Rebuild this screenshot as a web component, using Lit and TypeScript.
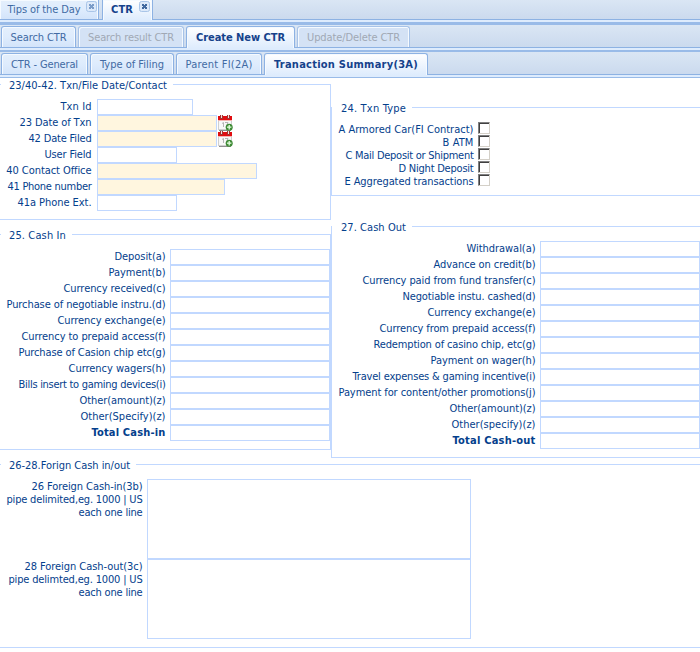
import { LitElement, html, css, svg } from "lit";
import { customElement, property } from "lit/decorators.js";

type Text = [string, number];

interface Field {
  label: Text[];
  width?: number;
  required?: boolean;
  date?: boolean;
  bold?: boolean;
}

const f = (text: string, w: number, extra: Partial<Field> = {}): Field => ({ label: [[text, w]], width: 160, ...extra });

const contact: Field[] = [
  f("Txn Id", 31, { width: 96 }),
  f("23 Date of Txn", 72, { width: 120, required: true, date: true }),
  f("42 Date Filed", 63, { width: 120, required: true, date: true }),
  f("User Field", 47, { width: 80 }),
  f("40 Contact Office", 85, { width: 160, required: true }),
  f("41 Phone number", 84, { width: 128, required: true }),
  f("41a Phone Ext.", 74, { width: 80 }),
];

const txnTypes: Text[] = [
  ["A Armored Car(FI Contract)", 135],
  ["B ATM", 31],
  ["C Mail Deposit or Shipment", 128],
  ["D Night Deposit", 75],
  ["E Aggregated transactions", 129],
];

const cashIn: Field[] = [
  f("Deposit(a)", 51),
  f("Payment(b)", 57),
  f("Currency received(c)", 102),
  f("Purchase of negotiable instru.(d)", 159),
  f("Currency exchange(e)", 108),
  f("Currency to prepaid access(f)", 144),
  f("Purchase of Casion chip etc(g)", 147),
  f("Currency wagers(h)", 97),
  f("Bills insert to gaming devices(i)", 147),
  f("Other(amount)(z)", 86),
  f("Other(Specify)(z)", 85),
  f("Total Cash-in", 74, { bold: true }),
];

const cashOut: Field[] = [
  f("Withdrawal(a)", 69),
  f("Advance on credit(b)", 102),
  f("Currency paid from fund transfer(c)", 173),
  f("Negotiable instu. cashed(d)", 133),
  f("Currency exchange(e)", 108),
  f("Currency from prepaid access(f)", 156),
  f("Redemption of casino chip, etc(g)", 162),
  f("Payment on wager(h)", 105),
  f("Travel expenses & gaming incentive(i)", 183),
  f("Payment for content/other promotions(j)", 197),
  f("Other(amount)(z)", 86),
  f("Other(specify)(z)", 84),
  f("Total Cash-out", 83, { bold: true }),
];

const foreign: Text[][] = [
  [["26 Foreign Cash-in(3b)", 111], ["pipe delimited,eg. 1000 | US", 136], ["each one line", 64]],
  [["28 Foreign Cash-out(3c)", 118], ["pipe delimted,eg. 1000 | US", 134], ["each one line", 64]],
];

/** A single line of text tracked so that it fills a given width. */
@customElement("fit-text")
export class FitText extends LitElement {
  @property() text = "";
  @property({ type: Number }) w = 0;

  static styles = css`
    :host { display: inline-block; white-space: pre; }
    .t { display: inline-block; }
  `;

  updated() {
    const el = this.renderRoot.querySelector(".t") as HTMLElement;
    el.style.letterSpacing = "0px";
    const natural = el.getBoundingClientRect().width;
    el.style.letterSpacing = `${(this.w - natural) / this.text.length}px`;
  }

  render() {
    return html`<span class="t">${this.text}</span>`;
  }
}

const fit = ([text, w]: Text) => html`<fit-text .text=${text} .w=${w}></fit-text>`;

const calendar = svg`
  <rect x="1.5" y="4.5" width="13" height="10" fill="#f8f8f8" stroke="#cfcfcf"/>
  <path d="M2 15.5h12" stroke="#8e8e8e"/>
  <rect x="1" y="1" width="14" height="4" fill="#e00d10"/>
  <path d="M1 5.5h14" stroke="#f5b5b2"/>
  <path d="M3 0h3v4H3zM10 0h3v4h-3z" fill="#a33331"/>
  <path d="M4 0h1v3H4zM11 0h1v3h-1z" fill="#f2dede"/>
  <path d="M5 8.5l1.5-1V12M8 7.5h3L9 12" fill="none" stroke="#b4b4b4"/>
  <circle cx="12.2" cy="12.2" r="3.5" fill="#3f8b36"/>
  <path d="M12.2 10v4.4M10 12.2h4.4" stroke="#e6ffe0" stroke-width="1.3"/>`;

@customElement("app-root")
export class AppRoot extends LitElement {
  static styles = css`
    :host {
      display: block; width: 700px; height: 652px; overflow: hidden; background: #fff;
      font: 11px/13px "DejaVu Sans Condensed", "DejaVu Sans", sans-serif;
      color: #04408c;
    }
    * { box-sizing: border-box; }
    .strip {
      display: flex; align-items: flex-end; gap: 2px; padding-left: 1px;
      background: linear-gradient(#dae6f4, #cbdaee); border-bottom: 1px solid #8db2e3;
    }
    .one { height: 20px; gap: 3px; padding-left: 0; }
    .two { height: 23px; }
    .three { height: 23px; }
    .under { height: 2px; background: #deecfd; }
    .rule { background: #99bbe8; }
    .r3 { height: 3px; }
    .r1 { height: 1px; }
    .tab {
      flex: none; height: 21px; padding: 4px 0 0; text-align: center; color: #416aa3;
      border: 1px solid #8db2e3; border-bottom: 0; border-radius: 3px 3px 0 0;
      background: linear-gradient(#e4effc, #deecfd 50%, #d3e4fa);
      box-shadow: inset 1px 1px 0 #f5faff, inset -1px 0 0 #f5faff;
    }
    .one .tab { height: 19px; padding-top: 3px; border-top: 0; border-radius: 0; display: flex; }
    .one .tab:first-child { border-left: 0; }
    .one .tab svg { margin-top: -2px; }
    .tab.on {
      margin-bottom: -1px; height: 22px; color: #15428b; font-weight: bold;
      background: linear-gradient(#fff, #deecfd);
    }
    .one .tab.on { height: 20px; }
    .tab.off { color: #a0a8b4; border-color: #a7c3e8; background: #d4e2f5; }
    .cols { display: grid; grid-template-columns: 331px 369px; }
    .group { border: 1px solid #c1d8ff; padding-bottom: 8px; }
    .left .group { border-left: 0; padding-left: 1px; }
    .wide { border-left: 0; border-right: 0; margin-top: 6px; padding-left: 1px; }
    .right .group { border-right: 0; }
    .left .group:first-child { margin-top: 6px; }
    .left .group:last-child { margin-top: 14px; }
    .right .group:first-child { margin-top: 29px; }
    .right .group:last-child { margin-top: 30px; }
    .legend { width: fit-content; height: 13px; margin: -6px 0 7px; padding: 0 6px 0 8px; background: #fff; }
    .right .legend { padding-left: 9px; }
    .row { display: flex; height: 16px; }
    .label { flex: none; text-align: right; padding: 1px 0.5px 0 0; white-space: nowrap; }
    .contact .label { width: 91px; margin-right: 5px; }
    .in .label { width: 165px; margin-right: 4px; }
    .out .label { width: 204px; margin-right: 4px; }
    .bold { font-weight: bold; }
    .box { flex: none; height: 16px; border: 1px solid #c1d8ff; background: #fff; }
    .required { background: #fff6df; }
    .check { display: flex; height: 13px; }
    .check .label { width: 142px; margin-right: 4px; }
    .tick {
      width: 12px; height: 12px; background: #fff; border: 1px solid; border-color: #808080 #d4d0c8 #d4d0c8 #808080;
      box-shadow: inset 1px 1px 0 #404040;
    }
    .area { display: flex; height: 80px; }
    .area .label { width: 142px; margin-right: 4px; }
    .line { height: 13px; }
    .text { width: 324px; height: 80px; border: 1px solid #c1d8ff; }
    svg { display: block; flex: none; }
    fit-text { vertical-align: top; }
  `;

  private tab(text: Text, width: number, state = "") {
    return html`<div class="tab ${state}" style="width:${width}px">${fit(text)}</div>`;
  }

  private closeTab(text: Text, width: number, lead: number, gap: number, state = "") {
    return html`<div class="tab ${state}" style="width:${width}px;padding-left:${lead}px;column-gap:${gap}px">
      ${fit(text)}
      <svg width="11" height="11" viewBox="0 0 11 11">
        <rect x=".5" y=".5" width="10" height="10" rx="2" fill="#dce9f9" stroke="#a9c5e8"/>
        <path d="M3 3h2v1h1V3h2v2H7v1h1v2H6V7H5v1H3V6h1V5H3z" fill=${state ? "#41699f" : "#7b9cc8"}/>
      </svg></div>`;
  }

  private rows(fields: Field[]) {
    return fields.map(
      (x) => html`<div class="row">
        <div class="label ${x.bold ? "bold" : ""}">${fit(x.label[0])}</div>
        <div class="box ${x.required ? "required" : ""}" style="width:${x.width}px"></div>
        ${x.date ? html`<svg width="16" height="16" viewBox="0 0 16 16">${calendar}</svg>` : ""}
      </div>`
    );
  }

  render() {
    return html`
      <div class="strip one">
        ${this.closeTab(["Tips of the Day", 73], 99, 7.5, 5.5)}
        ${this.closeTab(["CTR", 22], 51, 8, 6, "on")}
      </div>
      <div class="under"></div>
      <div class="rule r3"></div>
      <div class="strip two">
        ${this.tab(["Search CTR", 56], 75)}
        ${this.tab(["Search result CTR", 86], 106, "off")}
        ${this.tab(["Create New CTR", 89], 109, "on")}
        ${this.tab(["Update/Delete CTR", 93], 113, "off")}
      </div>
      <div class="under"></div>
      <div class="rule r1"></div>
      <div class="rule r1"></div>
      <div class="strip three">
        ${this.tab(["CTR - General", 67], 87)}
        ${this.tab(["Type of Filing", 64], 84)}
        ${this.tab(["Parent FI(2A)", 67], 86)}
        ${this.tab(["Tranaction Summary(3A)", 144], 164, "on")}
      </div>
      <div class="under"></div>
      <div class="rule r1"></div>

      <div class="cols">
        <div class="left">
          <div class="group contact">
            <div class="legend">${fit(["23/40-42. Txn/File Date/Contact", 158])}</div>
            ${this.rows(contact)}
          </div>
          <div class="group in">
            <div class="legend">${fit(["25. Cash In", 57])}</div>
            ${this.rows(cashIn)}
          </div>
        </div>
        <div class="right">
          <div class="group">
            <div class="legend">${fit(["24. Txn Type", 65])}</div>
            ${txnTypes.map((t) => html`<div class="check"><div class="label">${fit(t)}</div><div class="tick"></div></div>`)}
          </div>
          <div class="group out">
            <div class="legend">${fit(["27. Cash Out", 65])}</div>
            ${this.rows(cashOut)}
          </div>
        </div>
      </div>
      <div class="group wide">
        <div class="legend">${fit(["26-28.Forign Cash in/out", 121])}</div>
        ${foreign.map(
          (lines) => html`<div class="area">
            <div class="label">${lines.map((l) => html`<div class="line">${fit(l)}</div>`)}</div>
            <div class="text"></div>
          </div>`
        )}
      </div>
    `;
  }
}
